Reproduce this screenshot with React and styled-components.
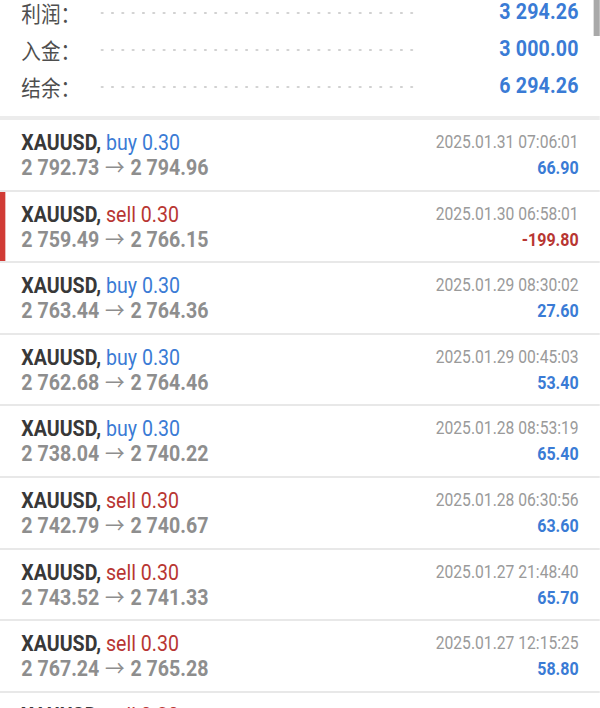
import React from 'react';
import styled, { createGlobalStyle } from 'styled-components';

// the source capture is squeezed horizontally; the page is laid out wide and narrowed to 600px
const SQUEEZE = 0.89;

const GlobalStyle = createGlobalStyle`
  html, body {
    margin: 0;
    padding: 0;
    background: #ffffff;
    overflow: hidden;
  }
  body {
    font-family: Roboto, 'Noto Sans CJK SC', 'Noto Sans', sans-serif;
  }
`;

const Page = styled.div`
  position: relative;
  width: ${600 / SQUEEZE}px;
  height: 708px;
  overflow: hidden;
  background: #fff;
  transform: scaleX(${SQUEEZE});
  transform-origin: 0 0;
`;

const ScrollThumb = styled.div`
  position: absolute;
  top: 0;
  right: 0;
  width: 7px;
  height: 36px;
  background: #a9a9a9;
`;

const Summary = styled.div`
  margin-top: -7px;
  padding: 0 24px 12px 24px;
  border-bottom: 4px solid #ececec;
`;

const SummaryRow = styled.div`
  display: flex;
  align-items: center;
  height: 37px;
`;

const SummaryLabel = styled.span`
  width: 85px;
  font-size: 22px;
  color: #4e4e4e;
  font-family: 'Noto Sans CJK SC', Roboto, sans-serif;
`;

const Leader = styled.span`
  flex: 1;
  height: 4px;
  margin-top: 2px;
  background-image: radial-gradient(circle, #d0d0d0 1.1px, transparent 1.5px);
  background-size: 11.6px 4px;
`;

const SummaryValue = styled.span`
  width: 184px;
  text-align: right;
  font-size: 22px;
  letter-spacing: 0.2px;
  font-weight: 700;
  color: #3a7bd5;
`;

const List = styled.div`
  display: flex;
  flex-direction: column;
`;

const Row = styled.div`
  position: relative;
  display: flex;
  justify-content: space-between;
  padding: 10px 24px 9.6px 24px;
  border-bottom: 2px solid #e8e8e8;
`;

const SideMark = styled.div`
  position: absolute;
  left: 0;
  top: 0;
  bottom: 0;
  width: 6px;
  background: #d13b35;
`;

const Left = styled.div`
  display: flex;
  flex-direction: column;
`;

const Right = styled.div`
  display: flex;
  flex-direction: column;
  align-items: flex-end;
`;

const Title = styled.div`
  font-size: 22px;
  line-height: 25px;
  color: #383838;
  font-weight: 700;
`;

const Side = styled.span`
  font-weight: 400;
  color: ${p => (p.$sell ? '#b83632' : '#3a7bd5')};
`;

const Prices = styled.div`
  font-size: 22px;
  line-height: 25px;
  color: #8e8e8e;
  font-weight: 700;
`;

const Arrow = styled.span`
  font-weight: 400;
  margin: 0 1px;
`;

const Time = styled.div`
  font-size: 17.6px;
  line-height: 25px;
  color: #9a9a9a;
`;

const Profit = styled.div`
  font-size: 18px;
  line-height: 25px;
  font-weight: 700;
  color: ${p => (p.$neg ? '#b83632' : '#3a7bd5')};
`;

const summary = [
  ['利润：', '3 294.26'],
  ['入金：', '3 000.00'],
  ['结余：', '6 294.26'],
];

const trades = [
  { side: 'buy', open: '2 792.73', close: '2 794.96', time: '2025.01.31 07:06:01', profit: '66.90' },
  { side: 'sell', open: '2 759.49', close: '2 766.15', time: '2025.01.30 06:58:01', profit: '-199.80', mark: true },
  { side: 'buy', open: '2 763.44', close: '2 764.36', time: '2025.01.29 08:30:02', profit: '27.60' },
  { side: 'buy', open: '2 762.68', close: '2 764.46', time: '2025.01.29 00:45:03', profit: '53.40' },
  { side: 'buy', open: '2 738.04', close: '2 740.22', time: '2025.01.28 08:53:19', profit: '65.40' },
  { side: 'sell', open: '2 742.79', close: '2 740.67', time: '2025.01.28 06:30:56', profit: '63.60' },
  { side: 'sell', open: '2 743.52', close: '2 741.33', time: '2025.01.27 21:48:40', profit: '65.70' },
  { side: 'sell', open: '2 767.24', close: '2 765.28', time: '2025.01.27 12:15:25', profit: '58.80' },
  { side: 'sell', open: '2 771.10', close: '2 768.90', time: '2025.01.27 09:02:11', profit: '66.00' },
];

const App = () => (
  <Page>
    <GlobalStyle />
    <Summary>
      {summary.map(([label, value]) => (
        <SummaryRow key={label}>
          <SummaryLabel>{label}</SummaryLabel>
          <Leader />
          <SummaryValue>{value}</SummaryValue>
        </SummaryRow>
      ))}
    </Summary>
    <List>
      {trades.map((t, i) => (
        <Row key={i}>
          {t.mark && <SideMark />}
          <Left>
            <Title>
              XAUUSD, <Side $sell={t.side === 'sell'}>{t.side} 0.30</Side>
            </Title>
            <Prices>
              {t.open} <Arrow>→</Arrow> {t.close}
            </Prices>
          </Left>
          <Right>
            <Time>{t.time}</Time>
            <Profit $neg={t.profit.startsWith('-')}>{t.profit}</Profit>
          </Right>
        </Row>
      ))}
    </List>
    <ScrollThumb />
  </Page>
);

export default App;
